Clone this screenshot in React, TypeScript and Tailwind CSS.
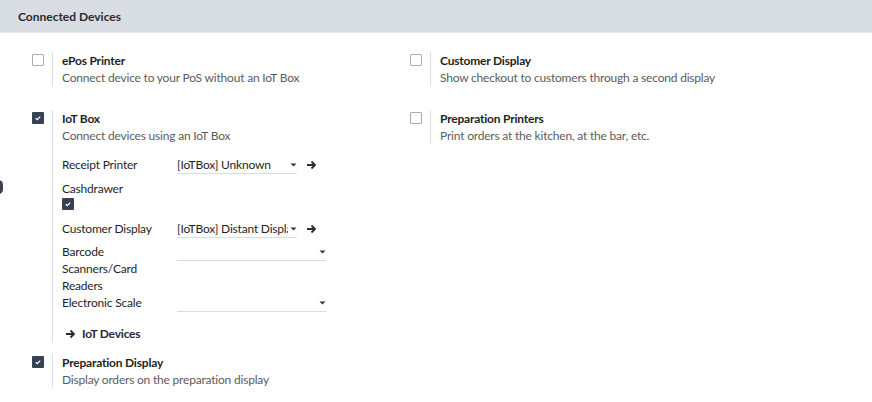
import React from "react";

const font = { fontFamily: "Lato, 'Noto Sans', sans-serif" };

function Check({ checked }: { checked: boolean }) {
  if (checked) {
    return (
      <span className="flex h-[12px] w-[12px] items-center justify-center rounded-[1px] bg-[#374151]">
        <svg width="8" height="8" viewBox="0 0 8 8">
          <path d="M1.8 4.2 L3.3 5.6 L6.2 2.6" stroke="#fff" strokeWidth="1.3" fill="none" />
        </svg>
      </span>
    );
  }
  return <span className="block h-[12px] w-[12px] rounded-[1px] border border-[#b5aca6] bg-white" />;
}

function Arrow() {
  return (
    <svg width="11" height="10" viewBox="0 0 11 10">
      <path d="M1 5 H9 M5.5 1.5 L9 5 L5.5 8.5" stroke="#2b2b33" strokeWidth="1.8" fill="none" />
    </svg>
  );
}

function Caret() {
  return (
    <svg width="7" height="4" viewBox="0 0 7 4">
      <path d="M0.5 0.5 H6.5 L3.5 3.5 Z" fill="#333" />
    </svg>
  );
}

function Setting({
  checked,
  title,
  desc,
  children,
}: {
  checked: boolean;
  title: string;
  desc: string;
  children?: React.ReactNode;
}) {
  return (
    <div className="flex">
      <div className="w-[32px] shrink-0" />
      <div className="w-[20px] shrink-0 pt-[2px]">
        <Check checked={checked} />
      </div>
      <div className="border-l border-[#dde1e6] pl-[9px]">
        <div className="font-bold text-[#1f1f1f]">{title}</div>
        <div className="text-[#5c5c5c]">{desc}</div>
        {children}
      </div>
    </div>
  );
}

function Field({ label, value, width, arrow }: { label: string; value?: string; width: string; arrow?: boolean }) {
  return (
    <div className="flex">
      <div className="w-[115px] shrink-0 text-[#1f1f1f]">{label}</div>
      <div className="flex items-start">
        <div className={`flex h-[18px] items-center justify-between gap-[2px] border-b border-[#d6dde3] ${width}`}>
          <span className="overflow-hidden whitespace-nowrap text-[#1f1f1f]">{value}</span>
          <span className="shrink-0">
            <Caret />
          </span>
        </div>
        {arrow && (
          <span className="ml-[9px] mt-[4px]">
            <Arrow />
          </span>
        )}
      </div>
    </div>
  );
}

export default function App() {
  return (
    <div
      className="relative h-[402px] w-[872px] overflow-hidden bg-white text-[12px] leading-[17px] tracking-[-0.2px]"
      style={font}
    >
      <div className="flex h-[33px] items-center border-b border-[#e6eaee] bg-[#d8dce3] pl-[18px] text-[12px] font-bold tracking-normal text-[#2a2a2a]">
        Connected Devices
      </div>
      <span className="absolute left-[-6px] top-[180px] h-[14px] w-[9px] rounded-full bg-[#3a4250]" />
      <div className="grid grid-cols-[378px_1fr] pt-[19px]">
        <div className="flex flex-col">
          <Setting checked={false} title="ePos Printer" desc="Connect device to your PoS without an IoT Box" />
          <div className="mt-[24px]">
            <Setting checked={true} title="IoT Box" desc="Connect devices using an IoT Box">
              <div className="mt-[12px] flex flex-col">
                <Field label="Receipt Printer" value="[IoTBox] Unknown" width="w-[120px]" arrow />
                <div className="mt-[6px] text-[#1f1f1f]">Cashdrawer</div>
                <div className="mt-[1px] mb-[10px]">
                  <Check checked={true} />
                </div>
                <Field label="Customer Display" value="[IoTBox] Distant Display" width="w-[120px]" arrow />
                <div className="mt-[5px] flex">
                  <div className="w-[115px] shrink-0 text-[#1f1f1f]">
                    Barcode
                    <br />
                    Scanners/Card
                    <br />
                    Readers
                  </div>
                  <div className="flex h-[18px] w-[149px] items-center justify-end border-b border-[#d6dde3]">
                    <Caret />
                  </div>
                </div>
                <Field label="Electronic Scale" width="w-[149px]" />
                <div className="mt-[13px] flex items-center gap-[6px] pl-[3px] font-bold text-[#2a2a33]">
                  <Arrow />
                  IoT Devices
                </div>
              </div>
            </Setting>
          </div>
          <div className="mt-[12px]">
            <Setting checked={true} title="Preparation Display" desc="Display orders on the preparation display" />
          </div>
        </div>
        <div className="flex flex-col gap-[24px]">
          <Setting checked={false} title="Customer Display" desc="Show checkout to customers through a second display" />
          <Setting checked={false} title="Preparation Printers" desc="Print orders at the kitchen, at the bar, etc." />
        </div>
      </div>
    </div>
  );
}
